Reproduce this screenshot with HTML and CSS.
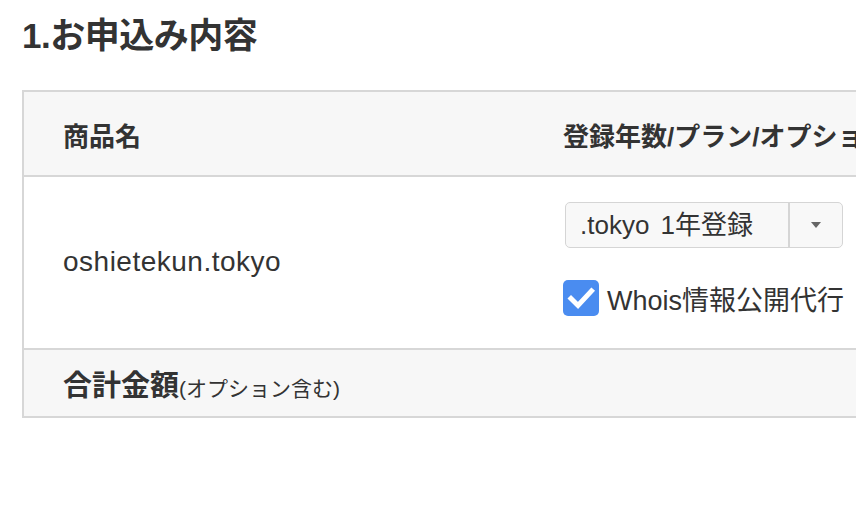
FILE: index.html
```html
<!DOCTYPE html>
<html lang="ja">
<head>
<meta charset="UTF-8">
<meta name="viewport" content="width=device-width, initial-scale=1.0">
<title>お申込み内容</title>
<link rel="stylesheet" href="styles.css">
</head>
<body>
    <div class="page">
        <h2 class="section-title">1.お申込み内容</h2>
        <table class="order-table">
            <tr class="head-row">
                <th class="col-name">商品名</th>
                <th class="col-plan">登録年数/プラン/オプション</th>
            </tr>
            <tr class="item-row">
                <td class="col-name domain">oshietekun.tokyo</td>
                <td class="col-plan plan-cell">
                    <div class="select-box">
                        <span class="select-value">.tokyo 1年登録</span>
                        <span class="select-arrow"></span>
                    </div>
                    <label class="check-line">
                        <span class="check-box">
                            <svg viewBox="0 0 36 36" width="36" height="36">
                                <path d="M8 18.5 L15 25.5 L28.5 11" fill="none" stroke="#fff" stroke-width="5" stroke-linecap="square"/>
                            </svg>
                        </span>
                        Whois情報公開代行
                    </label>
                </td>
            </tr>
            <tr class="total-row">
                <td class="col-name"><strong>合計金額</strong><small>(オプション含む)</small></td>
                <td class="col-plan"></td>
            </tr>
        </table>
    </div>
</body>
</html>
```

FILE: styles.css
```css
body {
    font-family: "Liberation Sans", "Noto Sans CJK JP", sans-serif;
    color: #333;
    background: #fff;
    margin: 0;
    padding: 0;
    overflow: hidden;
}
.page {
    padding: 13px 0 0 22px;
    width: 1100px;
}
.section-title {
    font-size: 35px;
    font-weight: bold;
    margin: 0 0 32px 0;
    line-height: 45px;
    letter-spacing: -0.5px;
}
.order-table {
    width: 1000px;
    border-collapse: collapse;
    border: 2px solid #d7d7d7;
}
.order-table th,
.order-table td {
    text-align: left;
    padding: 0;
    vertical-align: middle;
}
.col-name {
    width: 500px;
    padding-left: 39px !important;
}
.head-row {
    background-color: #f7f7f7;
    height: 85px;
    border-bottom: 2px solid #d7d7d7;
}
.head-row th {
    font-size: 26px;
    font-weight: bold;
    padding-top: 2px !important;
}
.item-row {
    height: 173px;
    border-bottom: 2px solid #d7d7d7;
}
.domain {
    font-size: 28px;
    letter-spacing: 0.5px;
    padding-bottom: 2px !important;
}
.plan-cell {
    padding-bottom: 6px !important;
}
.select-box {
    display: flex;
    width: 278px;
    height: 46px;
    border: 1px solid #d5d5d5;
    border-radius: 5px;
    background-color: #f8f8f8;
    margin-left: 2px;
    box-sizing: border-box;
}
.select-value {
    flex: 1;
    font-size: 26px;
    line-height: 44px;
    padding-left: 14px;
    word-spacing: 4px;
    border-right: 2px solid #d5d5d5;
}
.select-arrow {
    width: 52px;
    display: flex;
    align-items: center;
    justify-content: center;
}
.select-arrow::after {
    content: "";
    border-left: 5px solid transparent;
    border-right: 5px solid transparent;
    border-top: 6px solid #666;
}
.check-line {
    display: flex;
    align-items: center;
    gap: 8px;
    font-size: 27px;
    margin-top: 31px;
}
.check-box {
    width: 36px;
    height: 36px;
    border-radius: 5px;
    background-color: #4a8cf0;
    display: block;
}
.check-box svg {
    display: block;
}
.total-row {
    background-color: #f7f7f7;
    height: 68px;
}
.total-row strong {
    font-size: 29px;
}
.total-row small {
    font-size: 21px;
}
```
